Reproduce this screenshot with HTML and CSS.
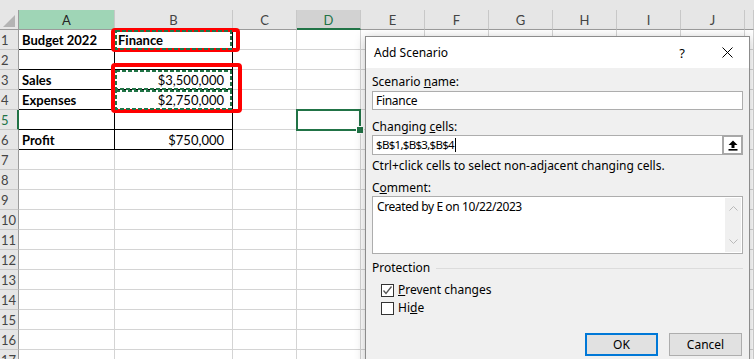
FILE: index.html
```html
<!DOCTYPE html>
<html>
<head>
    <title>Add Scenario</title>
    <link rel="stylesheet" href="styles.css">
</head>
<body>
    <div class="app">
        <div class="topband"></div>
        <div class="grid" id="grid"></div>

        <!-- copy marquee and annotations -->
        <div class="mark mark-b1"></div>
        <div class="mark mark-b34"></div>
        <svg class="ants" width="754" height="359">
            <rect x="116" y="31" width="115" height="18" />
            <rect x="116" y="71" width="115" height="18" />
            <rect x="116" y="91" width="115" height="18" />
        </svg>
        <div class="active-cell"><span class="handle"></span></div>

        <!-- Add Scenario dialog -->
        <div class="dialog">
            <div class="title">
                <span class="title-text">Add Scenario</span>
                <span class="help">?</span>
                <svg class="close" width="11" height="11" viewBox="0 0 11 11">
                    <path d="M0.5 0.5 L10.5 10.5 M10.5 0.5 L0.5 10.5" stroke="#000" stroke-width="1" fill="none"/>
                </svg>
            </div>
            <div class="body">
                <div class="label label-first">Scenario <u>n</u>ame:</div>
                <div class="field">Finance</div>

                <div class="label">Changing <u>c</u>ells:</div>
                <div class="field-row">
                    <div class="field field-grow">$B$1,$B$3,$B$4<span class="caret"></span></div>
                    <div class="collapse">
                        <svg width="10" height="11" viewBox="0 0 10 11">
                            <path d="M5 0.5 L9.5 5 L6.5 5 L6.5 8 L3.5 8 L3.5 5 L0.5 5 Z" fill="#000"/>
                            <rect x="0.5" y="9" width="9" height="1.6" fill="#000"/>
                        </svg>
                    </div>
                </div>
                <div class="hint">Ctrl+click cells to select non-adjacent changing cells.</div>

                <div class="label label-comment">C<u>o</u>mment:</div>
                <div class="memo">
                    <div class="memo-text">Created by E on 10/22/2023</div>
                    <div class="scroll">
                        <svg width="9" height="5" viewBox="0 0 9 5"><path d="M0.5 4.5 L4.5 0.5 L8.5 4.5" stroke="#b9b9b9" fill="none"/></svg>
                        <svg width="9" height="5" viewBox="0 0 9 5"><path d="M0.5 0.5 L4.5 4.5 L8.5 0.5" stroke="#b9b9b9" fill="none"/></svg>
                    </div>
                </div>

                <div class="group">
                    <span>Protection</span>
                    <span class="group-line"></span>
                </div>
                <label class="check check-first">
                    <span class="box">
                        <svg width="11" height="11" viewBox="0 0 11 11"><path d="M1.5 5.5 L4 8.5 L9.5 1.5" stroke="#555" stroke-width="1.3" fill="none"/></svg>
                    </span>
                    <span><u>P</u>revent changes</span>
                </label>
                <label class="check">
                    <span class="box"></span>
                    <span>Hi<u>d</u>e</span>
                </label>

                <div class="buttons">
                    <button class="btn btn-default">OK</button>
                    <button class="btn">Cancel</button>
                </div>
            </div>
        </div>
    </div>

    <script>
        const colNames = ['A', 'B', 'C', 'D', 'E', 'F', 'G', 'H', 'I', 'J', ''];
        const rows = {
            1: [{ text: 'Budget 2022', bold: true }, { text: 'Finance', bold: true }],
            3: [{ text: 'Sales', bold: true }, { text: '$3,500,000', num: true }],
            4: [{ text: 'Expenses', bold: true }, { text: '$2,750,000', num: true }],
            6: [{ text: 'Profit', bold: true }, { text: '$750,000', num: true }]
        };

        const grid = document.getElementById('grid');

        function addCell(cls, text) {
            const div = document.createElement('div');
            div.className = cls;
            if (text) div.textContent = text;
            grid.appendChild(div);
        }

        // Header row
        addCell('hdr corner');
        colNames.forEach(name => {
            let cls = 'hdr col-hdr';
            if (name === 'A') cls += ' col-marked';
            if (name === 'D') cls += ' col-active';
            addCell(cls, name);
        });

        // Rows 1..17
        for (let r = 1; r <= 17; r++) {
            addCell(r === 5 ? 'hdr row-hdr row-active' : 'hdr row-hdr', String(r));
            colNames.forEach((name, i) => {
                let cls = 'cell';
                let text = '';
                if (r <= 6 && i < 2) cls += ' boxed';
                if (rows[r] && rows[r][i]) {
                    const c = rows[r][i];
                    text = c.text;
                    if (c.bold) cls += ' bold';
                    if (c.num) cls += ' num';
                }
                addCell(cls, text);
            });
        }
    </script>
</body>
</html>
```

FILE: styles.css
```css
body { margin: 0; overflow: hidden; background: #fff; }
.app { position: relative; width: 754px; height: 359px; overflow: hidden; background: #e6e6e6; font-family: Lato, sans-serif; }
.topband { height: 10px; }

/* spreadsheet */
.grid { display: grid; grid-template-columns: 19px 96px 118px repeat(8, 64px) 1fr; grid-auto-rows: 20px; background: #fff; }
.grid div { box-sizing: border-box; border-right: 1px solid #d4d4d4; border-bottom: 1px solid #d4d4d4; font-size: 13px; line-height: 20px; padding: 0 3px; white-space: nowrap; overflow: hidden; color: #000; }
.grid .hdr { background: #e6e6e6; color: #444; border-right-color: #c8c8c8; border-bottom-color: #c8c8c8; }
.grid .col-hdr { text-align: center; border-bottom-color: #9b9b9b; }
.grid .corner { border-bottom-color: #9b9b9b; border-right-color: #9b9b9b; position: relative; }
.grid .corner::after { content: ""; position: absolute; right: 3px; bottom: 2px; border-style: solid; border-width: 0 0 12px 12px; border-color: transparent transparent #b4b4b4 transparent; }
.grid .col-marked { background: #9fd5b6; color: #262626; }
.grid .col-active { background: #d2d2d2; color: #217346; border-bottom: 2px solid #217346; }
.grid .row-hdr { padding: 0 0 0 1px; border-right-color: #9b9b9b; }
.grid .row-active { border-right: 2px solid #217346; color: #217346; }
.grid .boxed { border-right-color: #000; border-bottom-color: #000; }
.grid .bold { font-weight: bold; }
.grid .num { text-align: right; padding-right: 8px; }

/* overlays */
.mark { position: absolute; border: 4px solid #f00; border-radius: 4px; box-sizing: border-box; }
.mark-b1 { left: 111px; top: 28px; width: 129px; height: 24px; }
.mark-b34 { left: 111px; top: 63px; width: 131px; height: 50px; }
.ants { position: absolute; left: 0; top: 0; pointer-events: none; }
.ants rect { fill: none; stroke: #217346; stroke-width: 2; stroke-dasharray: 4 2; }
.active-cell { position: absolute; left: 296px; top: 109px; width: 65px; height: 22px; box-sizing: border-box; border: 2px solid #217346; }
.handle { position: absolute; right: -5px; bottom: -5px; width: 6px; height: 6px; background: #217346; border: 1px solid #fff; }

/* dialog */
.dialog { position: absolute; left: 365px; top: 36px; width: 385px; height: 340px; box-sizing: border-box; border: 1px solid #8c8c8c; background: #f0f0f0; font-family: "Noto Sans", sans-serif; font-size: 12px; color: #000; box-shadow: 0 2px 10px rgba(0, 0, 0, 0.25); }
.title { height: 31px; background: #fff; display: flex; align-items: center; padding-left: 8px; }
.title-text { flex: 1; }
.help { margin-right: 37px; font-size: 13px; }
.close { margin-right: 16px; }
.body { padding: 0 6px; }
.label { line-height: 14px; margin-top: 10px; }
.label-first { margin-top: 7px; }
.label-comment { margin-top: 8px; }
.field { height: 19px; margin-top: 2px; box-sizing: border-box; border: 1px solid #adadad; background: #fff; padding: 0 4px 0 3px; line-height: 17px; letter-spacing: -0.3px; }
.field-row { display: flex; margin-top: 1px; }
.field-grow { flex: 1; margin-top: 0; height: 20px; line-height: 18px; border-right: none; font-size: 11.5px; letter-spacing: -0.7px; }
.caret { display: inline-block; width: 1px; height: 14px; margin-left: 1px; background: #000; vertical-align: -3px; }
.collapse { width: 21px; height: 20px; box-sizing: border-box; border: 2px solid #a8a8a8; background: #fff; display: flex; align-items: center; justify-content: center; }
.hint { line-height: 14px; margin-top: 4px; }
.memo { display: flex; height: 58px; margin-top: 1px; box-sizing: border-box; border: 1px solid #adadad; background: #fff; }
.memo-text { flex: 1; padding: 2px 4px; line-height: 15px; letter-spacing: -0.4px; }
.scroll { width: 16px; margin: 1px 1px 1px 0; background: #f0f0f0; display: flex; flex-direction: column; justify-content: space-between; align-items: center; padding: 8px 0; box-sizing: border-box; }
.group { display: flex; align-items: center; margin-top: 7px; line-height: 14px; }
.group-line { flex: 1; height: 1px; background: #dcdcdc; margin-left: 6px; }
.check { display: flex; align-items: center; margin: 4px 0 0 9px; line-height: 14px; }
.check-first { margin-top: 8px; }
.box { width: 13px; height: 13px; box-sizing: border-box; border: 1px solid #333; background: #fff; margin-right: 4px; display: flex; align-items: center; justify-content: center; }
.buttons { display: flex; justify-content: flex-end; gap: 11px; margin-top: 18px; padding-right: 1px; }
.btn { width: 73px; height: 23px; box-sizing: border-box; border: 1px solid #adadad; background: #e1e1e1; font-family: "Noto Sans", sans-serif; font-size: 12px; color: #000; padding: 0; }
.btn-default { border: 2px solid #0078d7; }
```
